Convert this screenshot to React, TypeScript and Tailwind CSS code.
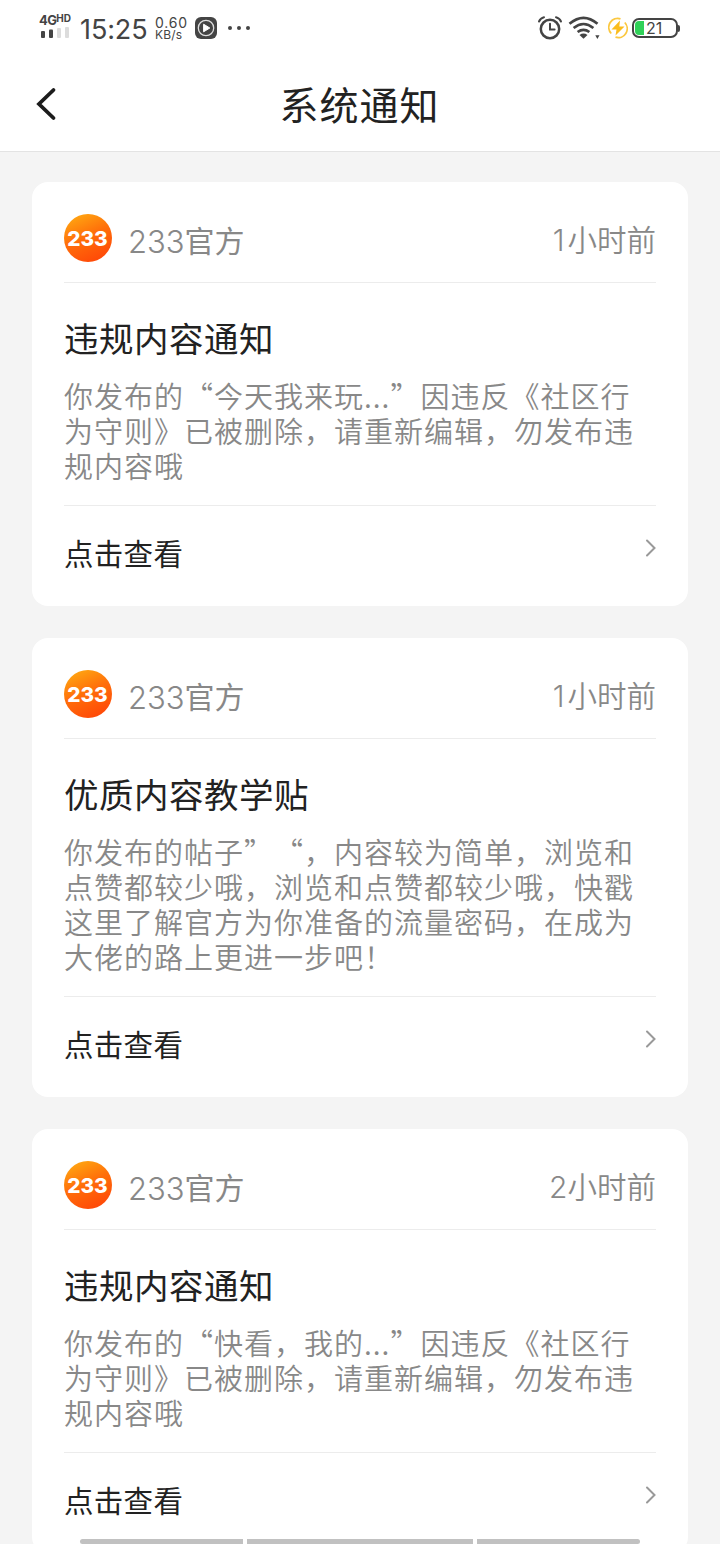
import clsx from "clsx";

interface Notice {
  id: number;
  time: string;
  title: string;
  body: string;
}

const notices: Notice[] = [
  {
    id: 1,
    time: "1小时前",
    title: "违规内容通知",
    body: "你发布的“今天我来玩...”因违反《社区行\n为守则》已被删除，请重新编辑，勿发布违\n规内容哦",
  },
  {
    id: 2,
    time: "1小时前",
    title: "优质内容教学贴",
    body: "你发布的帖子”“，内容较为简单，浏览和\n点赞都较少哦，浏览和点赞都较少哦，快戳\n这里了解官方为你准备的流量密码，在成为\n大佬的路上更进一步吧！",
  },
  {
    id: 3,
    time: "2小时前",
    title: "违规内容通知",
    body: "你发布的“快看，我的...”因违反《社区行\n为守则》已被删除，请重新编辑，勿发布违\n规内容哦",
  },
];

function SignalIcon() {
  return (
    <svg className="mt-px" width="32" height="12" viewBox="0 0 32 12">
      <rect x="2" y="4" width="4" height="7" rx="1" fill="#444" />
      <rect x="10" y="2.5" width="4" height="8.5" rx="1" fill="#444" />
      <rect x="18" y="1" width="4" height="10" rx="1" fill="#dcdcdc" />
      <rect x="26" y="0" width="4" height="11" rx="1" fill="#dcdcdc" />
    </svg>
  );
}

function StatusBar() {
  return (
    <div className="flex h-14 items-center pl-[39px] pr-[40px] font-['Inter',sans-serif] text-[#444]">
      <div className="w-[33px] pb-[3px]">
        <div className="flex h-[12px] items-start font-bold leading-none">
          <span className="text-[13px] leading-[12px] tracking-[-0.6px]">4G</span>
          <span className="text-[10px] leading-[9px]">HD</span>
        </div>
        <SignalIcon />
      </div>
      <span className="ml-2 w-[75px] pt-[2px] text-[27px] leading-none tracking-[-0.1px]">15:25</span>
      <div className="w-[39px] whitespace-nowrap">
        <div className="text-[14px] leading-[13px] tracking-[0.8px]">0.60</div>
        <div className="text-[12px] leading-[12px] tracking-[0.2px]">KB/s</div>
      </div>
      <svg className="shrink-0" width="24" height="24" viewBox="0 0 24 24" fill="none">
        <rect x="1" y="1" width="22" height="22" rx="6" fill="#444" />
        <circle cx="12" cy="12" r="7.7" stroke="#ddd" strokeWidth="1.3" />
        <path d="M9.6 8.2v7.6l6.2-3.8z" fill="#fff" stroke="#fff" strokeWidth="1" strokeLinejoin="round" />
      </svg>
      <svg className="ml-[8px]" width="26" height="6" viewBox="0 0 26 6" fill="#444">
        <circle cx="4" cy="3" r="2" />
        <circle cx="13" cy="3" r="2" />
        <circle cx="22" cy="3" r="2" />
      </svg>

      <div className="ml-auto flex items-center">
        <svg width="26" height="26" viewBox="0 0 26 26" fill="none" stroke="#444" strokeLinecap="round">
          <circle cx="13" cy="14" r="9.2" strokeWidth="2.5" />
          <path d="M13 8.8V14.6H17.6" strokeWidth="2" />
          <path d="M2 6.5Q3.5 3 7 2.2M24 6.5Q22.5 3 19 2.2" strokeWidth="2" />
        </svg>
        <svg className="ml-[5px]" width="32" height="26" viewBox="0 0 32 26" fill="none" stroke="#444" strokeWidth="2.6">
          <path d="M1.5 8.8Q15.5 -3.2 29.5 8.8" />
          <path d="M5.6 13Q15.5 5 25.4 13" />
          <path d="M9.6 17Q15.5 12.6 21.4 17" />
          <path d="M11.5 20Q15.5 17.2 19.5 20L15.5 23.8z" fill="#444" stroke="none" />
          <path d="M27.3 20.3H31.5L29.4 24z" fill="#444" stroke="none" />
        </svg>
        <svg className="ml-[8px]" width="20" height="22" viewBox="0 0 20 22" fill="none">
          <path d="M12.5 1.8A9 9 0 0 0 3.2 16.5M7.5 20.2A9 9 0 0 0 16.8 5.5" stroke="#fbc840" strokeWidth="1.8" />
          <path d="M12 3.5L3.5 12.5H8.5L7.5 18.5L16.5 9.5H11.3z" fill="#fbbd1e" />
        </svg>
        <div className="ml-[4px] flex items-center">
          <div className="flex h-[20px] w-[46px] items-center rounded-[7px] border-2 border-[#444] p-px">
            <div className="h-full w-[9px] rounded-l-[4px] bg-[#30d158]" />
            <span className="ml-[2px] text-[16px] leading-none">21</span>
          </div>
          <div className="h-[7px] w-[2px] rounded-r-sm bg-[#444]" />
        </div>
      </div>
    </div>
  );
}

function NavBar() {
  return (
    <header className="grid h-24 grid-cols-[1fr_auto_1fr] items-center border-b border-[#e3e3e3] pl-[36px]">
      <svg width="22" height="36" viewBox="0 0 22 36" fill="none">
        <path d="M17.5 4L3 18L17.5 32" stroke="#1c1c1c" strokeWidth="3.8" strokeLinecap="round" strokeLinejoin="miter" />
      </svg>
      <h1 className="-ml-[37px] pb-px text-[39px] leading-none tracking-[1px] text-[#222]">系统通知</h1>
    </header>
  );
}

function Logo() {
  return (
    <svg width="48" height="48" viewBox="0 0 48 48">
      <defs>
        <linearGradient id="orange" x1="0.15" y1="0" x2="0.6" y2="1">
          <stop offset="0" stopColor="#ffab12" />
          <stop offset="0.5" stopColor="#ff6f0a" />
          <stop offset="1" stopColor="#ff4a08" />
        </linearGradient>
      </defs>
      <circle cx="24" cy="24" r="24" fill="url(#orange)" />
      <text
        x="3.2"
        y="31.5"
        textLength="40.5"
        lengthAdjust="spacingAndGlyphs"
        className="fill-white font-['Inter',sans-serif] text-[20.5px] font-extrabold"
      >
        233
      </text>
    </svg>
  );
}

function NoticeCard({ notice }: { notice: Notice }) {
  return (
    <section className="rounded-[16px] bg-white px-8">
      <div className="flex h-[101px] items-center border-b border-[#ececec] pt-[12px] text-[#888]">
        <Logo />
        <div className="ml-4 flex items-center pt-[2px]">
          <span className="pt-[4px] font-['Inter',sans-serif] text-[31px] font-[350] leading-none">233</span>
          <span className="text-[30px] leading-none">官方</span>
        </div>
        <div className="ml-auto flex items-center pt-[2px] font-[350]">
          <span
            className={clsx(
              "pt-[2px] font-['Inter',sans-serif] text-[30px] leading-none",
              notice.time.startsWith("1") && "pr-[3px]"
            )}
          >
            {notice.time.slice(0, 1)}
          </span>
          <span className="text-[29.5px] leading-none">{notice.time.slice(1)}</span>
        </div>
      </div>

      <div className="border-b border-[#ececec] pb-[22px] pt-[34px]">
        <h2 className="text-[34.5px] leading-[40px] tracking-[0.5px] text-[#222]">{notice.title}</h2>
        <p className="mt-[21px] whitespace-pre text-[29px] font-[350] leading-[35px] tracking-[1px] text-[#888] [font-feature-settings:'chws'_0,'halt'_0] [text-spacing-trim:space-all]">
          {notice.body}
        </p>
      </div>

      <div className="flex h-[100px] items-center justify-between">
        <span className="pb-[6px] text-[29.5px] leading-none tracking-[0.3px] text-[#222]">点击查看</span>
        <svg className="mb-[16px]" width="12" height="20" viewBox="0 0 12 20" fill="none">
          <path d="M3 2.5L10.5 10L3 17.5" stroke="#999" strokeWidth="2" strokeLinecap="round" />
        </svg>
      </div>
    </section>
  );
}

function GestureBar() {
  const widths = ["w-[163px] rounded-l-full", "w-[226px]", "w-[163px] rounded-r-full"];
  return (
    <div className="absolute bottom-0 left-0 flex w-full justify-center gap-[4px]">
      {widths.map((w, i) => (
        <div key={i} className={clsx("h-[5px] bg-[#c1c1c1]", w)} />
      ))}
    </div>
  );
}

export default function App() {
  return (
    <div
      lang="zh-CN"
      className="relative h-[1544px] w-[720px] overflow-hidden bg-[#f4f4f4] font-['Noto_Sans_CJK_SC',sans-serif]"
    >
      <div className="bg-white">
        <StatusBar />
        <NavBar />
      </div>
      <main className="flex flex-col gap-8 px-8 pt-[30px]">
        {notices.map((notice) => (
          <NoticeCard key={notice.id} notice={notice} />
        ))}
      </main>
      <GestureBar />
    </div>
  );
}
